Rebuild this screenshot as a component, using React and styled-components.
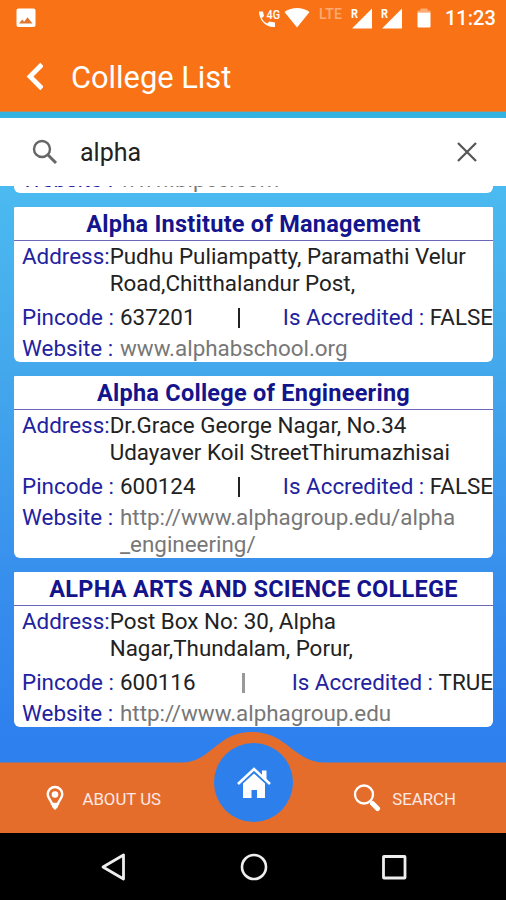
import React, { useState } from 'react';
import styled, { createGlobalStyle } from 'styled-components'

const colleges = [
    {
        name: 'Alpha Institute of Management',
        address: ['Pudhu Puliampatty, Paramathi Velur', 'Road,Chitthalandur Post,'],
        pincode: '637201',
        accredited: 'FALSE',
        website: ['www.alphabschool.org'],
    },
    {
        name: 'Alpha College of Engineering',
        address: ['Dr.Grace George Nagar, No.34', 'Udayaver Koil StreetThirumazhisai'],
        pincode: '600124',
        accredited: 'FALSE',
        website: ['http://www.alphagroup.edu/alpha', '_engineering/'],
    },
    {
        name: 'ALPHA ARTS AND SCIENCE COLLEGE',
        address: ['Post Box No: 30, Alpha', 'Nagar,Thundalam, Porur,'],
        pincode: '600116',
        accredited: 'TRUE',
        website: ['http://www.alphagroup.edu'],
    },
]

function StatusIcons() {
    return (
        <StatusBar>
            <svg width="20" height="20" viewBox="0 0 20 20">
                <rect x="0.5" y="0.5" width="19" height="18.5" rx="2" fill="#fff" />
                <path d="M3 15.5l3.2-4 2 2.2 3.3-4.4 5 6.2z" fill="#e0762f" />
            </svg>
            <StatusRight>
                <svg width="23" height="21" viewBox="0 0 23 21">
                    <path d="M1 3.5h4l1 4.500-2.200 2.200c1.300 2.500 3 4.100 5.400 5.400l2.200-2.200 5.600 1v4.600C8 20 1 12 1 3.500z" fill="#fff" />
                    <text x="8.500" y="10.500" fontSize="13" fontWeight="500" textLength="13.500" lengthAdjust="spacingAndGlyphs" fill="#fff">4G</text>
                </svg>
                <svg width="26" height="21" viewBox="0 0 26 21">
                    <path d="M0.500 4C8-1.200 18-1.200 25.500 4L13 19.500z" fill="#fff" />
                </svg>
                <Lte>LTE</Lte>
                <Signal />
                <Signal />
                <svg width="14" height="20" viewBox="0 0 14 20">
                    <path d="M3.500 0.500h7v2h3v2h-13v-2h3z" fill="#fff" opacity="0.4" />
                    <path d="M0.500 4.500h13V18.500q0 1-1 1h-11q-1 0-1-1z" fill="#fff" />
                </svg>
                <Clock>11:23</Clock>
            </StatusRight>
        </StatusBar>
    )
}

function Signal() {
    return (
        <SignalIcon width="22" height="21" viewBox="0 0 22 21">
            <path d="M21 0.500V20.500H1z" fill="#fff" />
            <path d="M0 0h8.500v10.500H0z" fill="#f97316" />
            <text x="0" y="9.800" fontSize="12" fontWeight="700" textLength="7" lengthAdjust="spacingAndGlyphs" fill="#fff">R</text>
        </SignalIcon>
    )
}

function CollegeCard({ college }) {
    return (
        <Card>
            <CardTitle>{college.name}</CardTitle>
            <AddressRow>
                <Label>Address:</Label>
                <Lines>
                    {college.address.map((line) => <div key={line}>{line}</div>)}
                </Lines>
            </AddressRow>
            <InfoRow>
                <Pair>
                    <Label $wide>Pincode :</Label>
                    <span>{college.pincode}</span>
                </Pair>
                <Divider $faded={college.accredited === 'TRUE'} />
                <Pair>
                    <Label>Is Accredited :&nbsp;</Label>
                    <span>{college.accredited}</span>
                </Pair>
            </InfoRow>
            <WebsiteRow>
                <Label $wide>Website :</Label>
                <Lines $muted>
                    {college.website.map((line) => <div key={line}>{line}</div>)}
                </Lines>
            </WebsiteRow>
        </Card>
    )
}

function App() {
    const [query, setQuery] = useState('alpha')

    return (
        <Screen>
            <GlobalStyle />
            <Header>
                <StatusIcons />
                <TitleBar>
                    <svg width="18" height="30" viewBox="0 0 18 30">
                        <path d="M17 2.500L5 14.500L17 26.500" fill="none" stroke="#fff" strokeWidth="4.800" />
                    </svg>
                    <h1>College List</h1>
                </TitleBar>
            </Header>
            <SearchBar>
                <svg width="26" height="26" viewBox="0 0 26 26">
                    <circle cx="10" cy="10" r="8" fill="none" stroke="#666" strokeWidth="2.400" />
                    <path d="M15.800 15.800L24 24" stroke="#666" strokeWidth="3" />
                </svg>
                <input type="text" value={query} onChange={(e) => setQuery(e.target.value)} />
                <svg width="20" height="20" viewBox="0 0 20 20" onClick={() => setQuery('')}>
                    <path d="M1 1L19 19M19 1L1 19" stroke="#555" strokeWidth="2.200" />
                </svg>
            </SearchBar>
            <List>
                <CutCard>
                    <WebsiteRow>
                        <Label $wide>Website :</Label>
                        <Lines $muted>www.bipcc.com</Lines>
                    </WebsiteRow>
                </CutCard>
                {colleges.map((college) => <CollegeCard key={college.name} college={college} />)}
            </List>
            <TabBar>
                <TabShape width="506" height="101" viewBox="0 0 506 101">
                    <path d="M0 30.500H181C212 30.500 216 0 252 0S293 30.500 325 30.500H506V101H0z" fill="#e56d2c" />
                </TabShape>
                <Tab>
                    <svg width="18" height="26" viewBox="0 0 18 26">
                        <path d="M6 19C5.500 15.500 1.700 13.500 1.700 9.300a7.300 7.300 0 0 1 14.600 0C16.300 13.500 12.500 15.500 12 19z" fill="none" stroke="#fff" strokeWidth="2.400" />
                        <circle cx="9" cy="9.500" r="3.300" fill="#fff" />
                        <path d="M6 18.500h6v3.500l-3 3-3-3z" fill="#fff" />
                    </svg>
                    <TabText>ABOUT US</TabText>
                </Tab>
                <HomeButton>
                    <svg width="36" height="34" viewBox="0 0 36 34">
                        <path d="M18 7.500L29 17.500V32H21V24H15.500V32H7V17.500z" fill="#fff" />
                        <path d="M2 18L18 3.500L34 18" fill="none" stroke="#2d80ec" strokeWidth="4.400" />
                        <path d="M26 4.500h4.500v9l-4.500-4z" fill="#fff" />
                        <path d="M2 18L18 3L34 18" fill="none" stroke="#fff" strokeWidth="2.600" />
                    </svg>
                </HomeButton>
                <Tab $end>
                    <svg width="28" height="28" viewBox="0 0 28 28">
                        <circle cx="11" cy="10.500" r="9" fill="none" stroke="#fff" strokeWidth="2.300" />
                        <path d="M19.500 19.500L24.500 24.500" stroke="#fff" strokeWidth="5" strokeLinecap="round" />
                    </svg>
                    <TabText>SEARCH</TabText>
                </Tab>
            </TabBar>
            <SystemNav>
                <svg width="28" height="30" viewBox="0 0 28 30">
                    <path d="M24.500 3V27L4 15z" fill="none" stroke="#eee" strokeWidth="2.800" strokeLinejoin="round" />
                </svg>
                <svg width="28" height="30" viewBox="0 0 28 30">
                    <circle cx="14" cy="15" r="12" fill="none" stroke="#eee" strokeWidth="2.600" />
                </svg>
                <svg width="28" height="30" viewBox="0 0 28 30">
                    <rect x="3.500" y="4.500" width="21.500" height="21.500" rx="0.500" fill="none" stroke="#eee" strokeWidth="2.800" />
                </svg>
            </SystemNav>
        </Screen>
    );
}

export default App;

const GlobalStyle = createGlobalStyle`
    * {
        box-sizing: border-box;
    }
    body {
        margin: 0;
        font-family: Roboto, sans-serif;
        overflow: hidden;
    }
    svg {
        display: block;
        flex-shrink: 0;
    }
`
const Screen = styled.div`
    width: 506px;
    height: 900px;
    display: flex;
    flex-direction: column;
    overflow: hidden;
    background: linear-gradient(#32b2e0 112px, #4bbaf0 190px, #44a8ec 370px, #3890ed 570px, #2e80ee 740px);
`
const Header = styled.div`
    height: 112px;
    flex-shrink: 0;
    background: #f97316;
    border-bottom: 1px solid #b98a60;
    margin-bottom: 6px;
`
const StatusBar = styled.div`
    height: 36px;
    padding: 8px 11px 0 16px;
    display: flex;
    justify-content: space-between;
    align-items: flex-start;
`
const StatusRight = styled.div`
    display: flex;
    align-items: flex-start;
    color: #fff;

        > svg:first-child {
            margin-right: 3px;
        }
`
const Lte = styled.div`
    width: 26px;
    margin: -2px 6px 0 9px;
    font-size: 14px;
    line-height: 16px;
    font-weight: 500;
    letter-spacing: 0.3px;
    opacity: 0.4;
`
const SignalIcon = styled.svg`
    margin-right: 8px;

        & + & {
            margin-right: 14px;
        }
`
const Clock = styled.div`
    width: 50px;
    margin-left: 14px;
    font-size: 20px;
    line-height: 20px;
    font-weight: 500;
`
const TitleBar = styled.div`
    height: 75px;
    padding: 8px 0 0 25px;
    display: flex;
    align-items: flex-start;
    color: #fff;

        svg {
            margin-top: 18px;
        }
        h1 {
            margin: 14px 0 0 28px;
            font-size: 30.8px;
            line-height: 40px;
            font-weight: 400;
        }
`
const SearchBar = styled.div`
    height: 68px;
    flex-shrink: 0;
    padding: 0 29px 0 32px;
    display: flex;
    align-items: center;
    background: #fff;

        input {
            flex: 1;
            min-width: 0;
            margin-left: 22px;
            padding: 1px 0 0;
            border: 0;
            outline: 0;
            font-family: inherit;
            font-size: 25px;
            color: #222;
        }
`
const List = styled.div`
    flex: 1;
    min-height: 0;
    padding: 0 13px 0 14px;
    display: flex;
    flex-direction: column;
    gap: 14px;
    overflow: hidden;
`
const Card = styled.div`
    flex-shrink: 0;
    background: #fff;
    border-radius: 1px 1px 6px 6px;
    font-size: 22.4px;
    line-height: 27px;
    color: #222;
    white-space: nowrap;
    overflow: hidden;
`
const CutCard = styled(Card)`
    margin-top: -20px;
`
const CardTitle = styled.div`
    height: 34px;
    padding-top: 1px;
    border-bottom: 1px solid #6a68b8;
    text-align: center;
    font-size: 23.5px;
    line-height: 33px;
    letter-spacing: 0.25px;
    font-weight: 700;
    color: #14148c;
`
const AddressRow = styled.div`
    display: flex;
    padding: 2px 0 0 8px;
`
const InfoRow = styled.div`
    display: flex;
    justify-content: space-between;
    align-items: center;
    padding: 7px 0 4px 8px;
`
const WebsiteRow = styled.div`
    display: flex;
    padding-left: 8px;
`
const Pair = styled.div`
    display: flex;
`
const Label = styled.div`
    width: ${(props) => (props.$wide ? '98px' : 'auto')};
    color: #2222a0;
`
const Lines = styled.div`
    color: ${(props) => (props.$muted ? '#777' : '#222')};
`
const Divider = styled.div`
    width: ${(props) => (props.$faded ? '3px' : '2px')};
    height: 20px;
    background: ${(props) => (props.$faded ? '#999' : '#222')};
`
const TabBar = styled.div`
    position: relative;
    height: 101px;
    margin-top: -30px;
    flex-shrink: 0;
    display: flex;
    align-items: flex-start;
    justify-content: space-between;
    padding: 0 50px 0 46px;
    color: #fff;
`
const TabShape = styled.svg`
    position: absolute;
    top: 0;
    left: 0;
`
const Tab = styled.div`
    position: relative;
    width: ${(props) => (props.$end ? '103px' : '115px')};
    height: 70px;
    margin-top: 31px;
    display: flex;
    align-items: center;
    justify-content: space-between;
`
const TabText = styled.div`
    padding-top: 1px;
    font-size: 16.8px;
    line-height: 20px;
    color: #fbe9e4;
    white-space: nowrap;
`
const HomeButton = styled.div`
    position: relative;
    width: 79px;
    height: 79px;
    margin-top: 11px;
    margin-left: -7px;
    border-radius: 50%;
    display: flex;
    align-items: center;
    justify-content: center;
    background: #2d80ec;
`
const SystemNav = styled.div`
    height: 67px;
    flex-shrink: 0;
    display: flex;
    align-items: center;
    justify-content: space-between;
    padding: 0 98px 0 99px;
    background: #000;
`
